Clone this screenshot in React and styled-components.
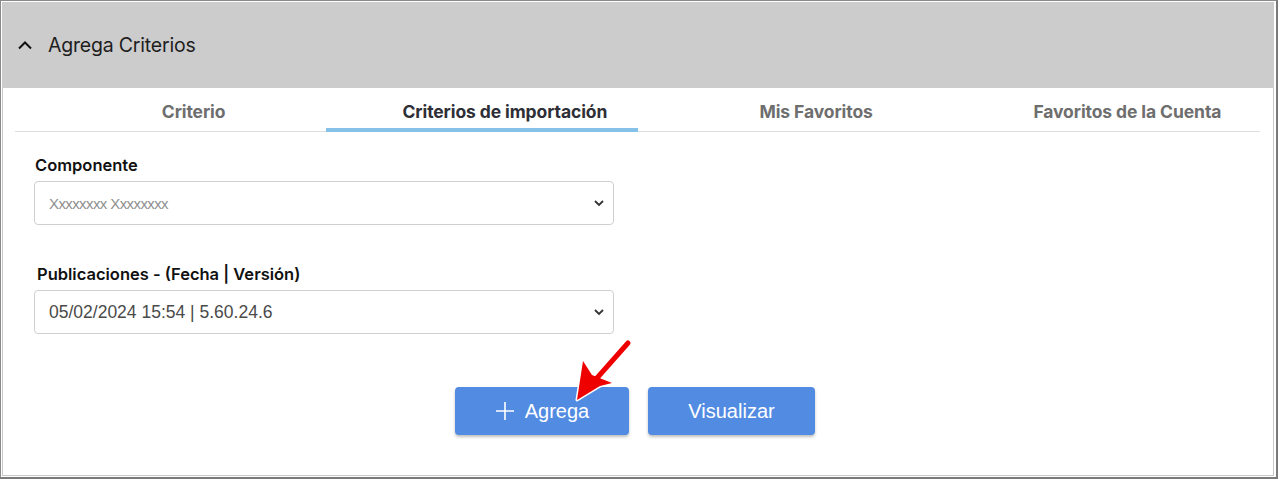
import React from "react"
import styled, { createGlobalStyle } from 'styled-components'

const Global = createGlobalStyle`
  html, body { margin: 0; padding: 0; background: #ffffff; }
  * { box-sizing: border-box; }
`

const Frame = styled.div`
  position: relative;
  width: 1278px;
  height: 479px;
  border-top: 1px solid #8a8a8a;
  border-left: 1px solid #8a8a8a;
  border-right: 2px solid #7a7a7a;
  border-bottom: 2px solid #7a7a7a;
  padding: 1px 2px 1px 1px;
  background: #ffffff;
`

const Panel = styled.div`
  height: 100%;
  border: 1px solid #c9c9c9;
  border-top: none;
  display: flex;
  flex-direction: column;
`

const Header = styled.div`
  height: 86px;
  background: #cccccc;
  display: flex;
  align-items: center;
  padding-left: 15px;
  gap: 15px;
  margin: 0 -1px;
`

const HeaderTitle = styled.h2`
  margin: 0;
  font-family: Inter, "Noto Sans", sans-serif;
  font-weight: 400;
  font-size: 19.5px;
  letter-spacing: -0.2px;
  color: #1e1e1e;
`

const Tabs = styled.div`
  margin: 0 13px 0 12px;
  display: grid;
  grid-template-columns: repeat(4, 1fr);
  border-bottom: 1px solid #dedede;
  height: 44px;
`

const Tab = styled.div`
  position: relative;
  display: flex;
  align-items: center;
  justify-content: center;
  padding: 4px 0 0 46px;
  font-family: Inter, "Noto Sans", sans-serif;
  font-weight: 700;
  font-size: 17.5px;
  letter-spacing: -0.1px;
  color: ${p => (p.active ? '#2e2e36' : '#6e6e6e')};
  &::after {
    content: '';
    display: ${p => (p.active ? 'block' : 'none')};
    position: absolute;
    left: 0;
    right: 0;
    bottom: -1px;
    height: 4px;
    background: #86c1ea;
  }
`

const Form = styled.div`
  position: relative;
  padding: 23px 0 0 31px;
  display: flex;
  flex-direction: column;
`

const Field = styled.div`
  width: 580px;
  display: flex;
  flex-direction: column;
  margin-bottom: ${p => p.gap || 0}px;
`

const Label = styled.label`
  font-family: Inter, "Noto Sans", sans-serif;
  font-weight: 600;
  font-size: 16.5px;
  letter-spacing: 0;
  color: #111;
  margin: 0 0 6px ${p => p.indent || 1}px;
  line-height: 20px;
`

const SelectBox = styled.div`
  height: 44px;
  border: 1px solid #cfcfcf;
  border-radius: 4px;
  display: flex;
  align-items: center;
  justify-content: space-between;
  padding: 0 8px 0 14px;
  background: #fff;
`

const SelectText = styled.span`
  font-family: "Liberation Sans", Arial, sans-serif;
  font-size: ${p => (p.placeholder ? '15px' : '17.5px')};
  color: ${p => (p.placeholder ? '#8f8f8f' : '#4a4a4a')};
  letter-spacing: ${p => (p.placeholder ? '-0.6px' : '0')};
`

const Actions = styled.div`
  display: flex;
  gap: 19px;
  padding-left: 421px;
  margin-top: 53px;
`

const Button = styled.button`
  width: ${p => p.w}px;
  height: 48px;
  border: none;
  border-radius: 4px;
  background: #528be2;
  color: #fff;
  font-family: "Liberation Sans", Arial, sans-serif;
  font-size: 20px;
  display: flex;
  align-items: center;
  justify-content: center;
  gap: 10px;
  box-shadow: 0 2px 3px rgba(0, 0, 0, 0.25);
  cursor: pointer;
`

const Arrow = styled.svg`
  position: absolute;
  left: 0;
  top: 0;
  pointer-events: none;
`

const Chevron = () => (
  <svg width="16" height="10" viewBox="0 0 16 10">
    <polyline points="2,8.5 8,2.5 14,8.5" fill="none" stroke="#111" strokeWidth="2" />
  </svg>
)

const Caret = () => (
  <svg width="12" height="8" viewBox="0 0 12 8">
    <polyline points="2,2 6,6 10,2" fill="none" stroke="#333" strokeWidth="1.8" />
  </svg>
)

const Plus = () => (
  <svg width="20" height="20" viewBox="0 0 20 20">
    <path d="M10 1v18M1 10h18" stroke="#fff" strokeWidth="1.6" />
  </svg>
)

const tabs = ['Criterio', 'Criterios de importación', 'Mis Favoritos', 'Favoritos de la Cuenta']

const App = () => (
  <>
    <Global />
    <Frame>
      <Panel>
        <Header>
          <Chevron />
          <HeaderTitle>Agrega Criterios</HeaderTitle>
        </Header>
        <Tabs>
          {tabs.map((t, i) => (
            <Tab key={t} active={i === 1}>{t}</Tab>
          ))}
        </Tabs>
        <Form>
          <Field gap={39}>
            <Label>Componente</Label>
            <SelectBox>
              <SelectText placeholder="1">Xxxxxxxx Xxxxxxxx</SelectText>
              <Caret />
            </SelectBox>
          </Field>
          <Field>
            <Label indent={3}>Publicaciones - (Fecha | Versión)</Label>
            <SelectBox>
              <SelectText>05/02/2024 15:54 | 5.60.24.6</SelectText>
              <Caret />
            </SelectBox>
          </Field>
          <Actions>
            <Button w={174}><Plus />Agrega</Button>
            <Button w={167}>Visualizar</Button>
          </Actions>
          <Arrow width="1270" height="340" viewBox="0 0 1270 340">
            <g transform="translate(-3,-134)">
              <path d="M628 345 L597 380" stroke="#fff" strokeWidth="8" strokeLinecap="round" />
              <path d="M577 402 L583 363 L592 377 L612 385 L600 388 Z" fill="#fff" stroke="#fff" strokeWidth="3" strokeLinejoin="round" />
              <path d="M628 345 L597 380" stroke="#ee0000" strokeWidth="5" strokeLinecap="round" />
              <path d="M577 402 L583 363 L592 377 L612 385 L600 388 Z" fill="#ee0000" />
            </g>
          </Arrow>
        </Form>
      </Panel>
    </Frame>
  </>
)

export default App
